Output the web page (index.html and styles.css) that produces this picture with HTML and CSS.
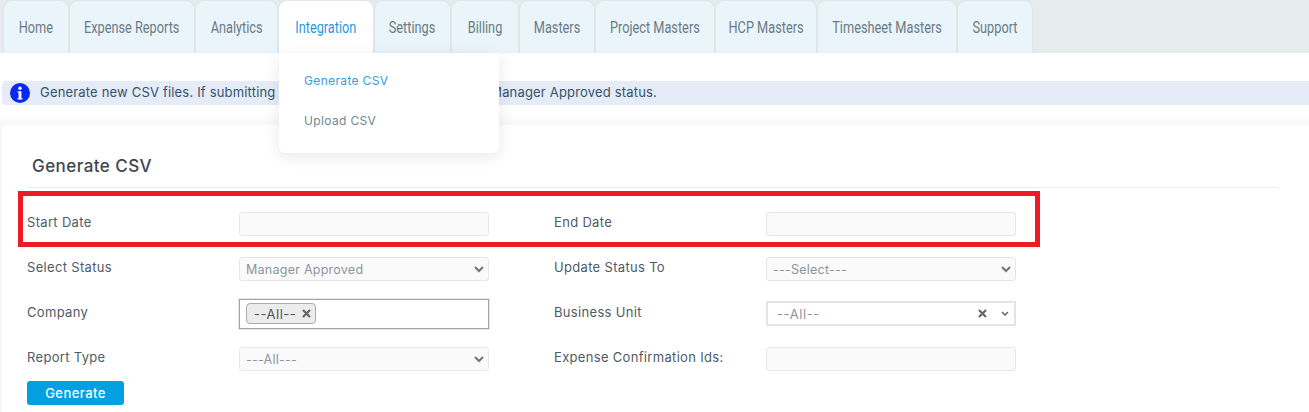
FILE: index.html
```html
<!DOCTYPE html>
<html lang="en">
<head>
<meta charset="utf-8">
<title>Generate CSV</title>
<link rel="stylesheet" href="styles.css">
</head>
<body>
<nav class="tabs">
  <a class="tab w-home"><span class="tab-text">Home</span></a>
  <a class="tab w-exp"><span class="tab-text">Expense Reports</span></a>
  <a class="tab w-ana"><span class="tab-text">Analytics</span></a>
  <a class="tab tab-active w-int"><span class="tab-text">Integration</span></a>
  <a class="tab w-set"><span class="tab-text">Settings</span></a>
  <a class="tab w-bil"><span class="tab-text">Billing</span></a>
  <a class="tab w-mas"><span class="tab-text">Masters</span></a>
  <a class="tab w-pro"><span class="tab-text">Project Masters</span></a>
  <a class="tab w-hcp"><span class="tab-text">HCP Masters</span></a>
  <a class="tab w-tim"><span class="tab-text">Timesheet Masters</span></a>
  <a class="tab w-sup"><span class="tab-text">Support</span></a>
</nav>
<div class="menu">
  <a class="menu-item menu-item-active">Generate CSV</a>
  <a class="menu-item">Upload CSV</a>
</div>
<main class="page">
  <div class="alert">
    <svg class="alert-icon" width="20" height="20" viewBox="0 0 20 20" aria-hidden="true">
      <circle cx="10" cy="10" r="10" fill="#0a28f0"/>
      <circle cx="10" cy="5.2" r="1.7" fill="#fff"/>
      <path d="M7.6 8.2h3.8v7h1.1v1.4H7.5v-1.4h1.1V9.6h-1z" fill="#fff"/>
    </svg>
    <span class="alert-text">Generate new CSV files. If submitting expense reports, they must be in Manager Approved status.</span>
  </div>
  <section class="card">
    <h2 class="card-title">Generate CSV</h2>
    <div class="highlight"></div>
    <form class="form">
      <label class="label">Start Date</label>
      <input class="field" type="text">
      <label class="label label-right">End Date</label>
      <input class="field" type="text">

      <label class="label">Select Status</label>
      <div class="select-wrap">
        <select class="field select"><option>Manager Approved</option></select>
        <svg class="chev" width="10" height="7" viewBox="0 0 10 7"><path d="M1 1l4 4 4-4" fill="none" stroke="#6c757d" stroke-width="2"/></svg>
      </div>
      <label class="label label-right">Update Status To</label>
      <div class="select-wrap">
        <select class="field select"><option>---Select---</option></select>
        <svg class="chev" width="10" height="7" viewBox="0 0 10 7"><path d="M1 1l4 4 4-4" fill="none" stroke="#6c757d" stroke-width="2"/></svg>
      </div>

      <label class="label">Company</label>
      <div class="multi">
        <span class="chip">--All--<svg class="x" width="9" height="9" viewBox="0 0 9 9"><path d="M1 1l7 7M8 1L1 8" stroke="#666" stroke-width="2.2"/></svg></span>
      </div>
      <label class="label label-right">Business Unit</label>
      <div class="combo">
        <span class="combo-text">--All--</span>
        <svg class="x" width="9" height="9" viewBox="0 0 9 9"><path d="M1 1l7 7M8 1L1 8" stroke="#666" stroke-width="2.2"/></svg>
        <svg class="combo-chev" width="8" height="5" viewBox="0 0 8 5"><path d="M1 1l3 3 3-3" fill="none" stroke="#666" stroke-width="1.5"/></svg>
      </div>

      <label class="label">Report Type</label>
      <div class="select-wrap">
        <select class="field select"><option>---All---</option></select>
        <svg class="chev" width="10" height="7" viewBox="0 0 10 7"><path d="M1 1l4 4 4-4" fill="none" stroke="#6c757d" stroke-width="2"/></svg>
      </div>
      <label class="label label-right">Expense Confirmation Ids:</label>
      <input class="field" type="text">
    </form>
    <button class="btn" type="button">Generate</button>
  </section>
</main>
</body>
</html>
```

FILE: styles.css
```css
* { box-sizing: border-box; }
html, body { margin: 0; height: 412px; overflow: hidden; }
body {
  background: #fff;
  color: #4a5560;
  font-family: Inter, "Open Sans", sans-serif;
  font-size: 13px;
  position: relative;
}
.tabs {
  display: flex;
  gap: 2px;
  height: 53px;
  padding-left: 4px;
  background: #e6ebee;
  align-items: flex-end;
}
.tab {
  height: 52px;
  display: flex;
  align-items: center;
  justify-content: center;
  background: #e9f5fb;
  border-radius: 8px 8px 0 0;
  box-shadow: 0 0 2px rgba(0, 0, 0, .08);
  font-family: Roboto, sans-serif;
  font-size: 17px;
  color: #6c7a84;
}
.tab-text {
  display: inline-block;
  white-space: nowrap;
  transform: scaleX(.75);
}
.tab-active { background: #fff; color: #1f9bdc; }
.w-home { width: 64px; }
.w-exp { width: 124px; }
.w-ana { width: 81px; }
.w-int { width: 94px; }
.w-set { width: 75px; }
.w-bil { width: 66px; }
.w-mas { width: 74px; }
.w-pro { width: 118px; }
.w-hcp { width: 100px; }
.w-tim { width: 138px; }
.w-sup { width: 74px; }
.menu {
  position: absolute;
  left: 279px;
  top: 53px;
  width: 220px;
  height: 100px;
  padding: 7px 0 0 25px;
  background: #fff;
  border-radius: 0 0 6px 6px;
  box-shadow: 0 4px 16px rgba(0, 0, 0, .09);
  z-index: 5;
}
.menu-item {
  display: flex;
  align-items: center;
  height: 40px;
  font-size: 12px;
  color: #6f8894;
  letter-spacing: .35px;
}
.menu-item-active { color: #2f9fe0; }
.page {
  padding: 28px 0 0 2px;
  height: 359px;
  background: linear-gradient(#fff 0, #fff 60px, #f7f7f7 72px);
}
.alert {
  display: flex;
  align-items: center;
  gap: 10px;
  height: 24px;
  padding-left: 8px;
  background: #e6ebf8;
  border-radius: 4px 0 0 4px;
  color: #33536a;
  font-size: 13px;
  letter-spacing: .18px;
}
.alert-icon { flex: none; }
.alert-text { margin-top: -2px; }
.card {
  position: relative;
  margin-top: 20px;
  height: 300px;
  padding: 30px 25px 0;
  background: #fff;
  border-radius: 4px 0 0 0;
}
.card-title {
  margin: 0;
  height: 33px;
  padding-left: 5px;
  border-bottom: 1px solid #eee;
  font-size: 17px;
  line-height: 22px;
  font-weight: 500;
  letter-spacing: .45px;
  color: #3e474f;
  width: 1251px;
}
.highlight {
  position: absolute;
  left: 16px;
  top: 66px;
  width: 1022px;
  height: 56px;
  border: 5px solid #ed1c24;
  pointer-events: none;
  z-index: 2;
}
.form {
  display: grid;
  grid-template-columns: 212px 250px 65px 212px 250px;
  grid-auto-rows: 24px;
  row-gap: 21px;
  margin-top: 24px;
}
.label {
  grid-column: 1;
  line-height: 20px;
  color: #4f5b66;
  font-size: 13px;
  letter-spacing: .32px;
}
.label-right { grid-column: 4; }
.field {
  display: block;
  width: 250px;
  height: 24px;
  margin: 0;
  padding: 0 6px;
  background: #fafafa;
  border: 1px solid #e7e7e7;
  border-radius: 3px;
  font: inherit;
  font-size: 12.5px;
  letter-spacing: .25px;
  color: #8a959e;
  outline: none;
}
.select { appearance: none; }
.select-wrap {
  position: relative;
  width: 250px;
  height: 24px;
}
.chev {
  position: absolute;
  right: 5px;
  top: 9px;
}
.multi {
  display: flex;
  align-items: flex-start;
  width: 250px;
  height: 30px;
  margin-top: -3px;
  padding: 3px 6px;
  background: #fff;
  border: 1px solid #a3a3a3;
  box-shadow: 0 0 0 1px #e8e8e8;
}
.chip {
  display: inline-flex;
  align-items: center;
  gap: 6px;
  height: 21px;
  padding: 0 4px 0 7px;
  background: #ececec;
  border: 1px solid #aaa;
  border-radius: 4px;
  font-size: 13px;
  letter-spacing: .5px;
  color: #555;
}
.combo {
  display: flex;
  align-items: center;
  width: 250px;
  height: 25px;
  margin-top: -1px;
  padding: 0 5px 0 9px;
  background: #fff;
  border: 2px solid #e4e4e4;
  font-size: 13px;
  letter-spacing: .6px;
  color: #8a959e;
}
.combo-text { flex: 1; }
.combo-chev { margin-left: 14px; }
.btn {
  display: block;
  width: 97px;
  height: 24px;
  margin-top: 10px;
  padding: 0;
  background: #02a0e0;
  border: 0;
  border-radius: 3px;
  color: #fff;
  font: inherit;
  font-size: 13px;
  font-weight: 500;
  letter-spacing: .45px;
}
```
